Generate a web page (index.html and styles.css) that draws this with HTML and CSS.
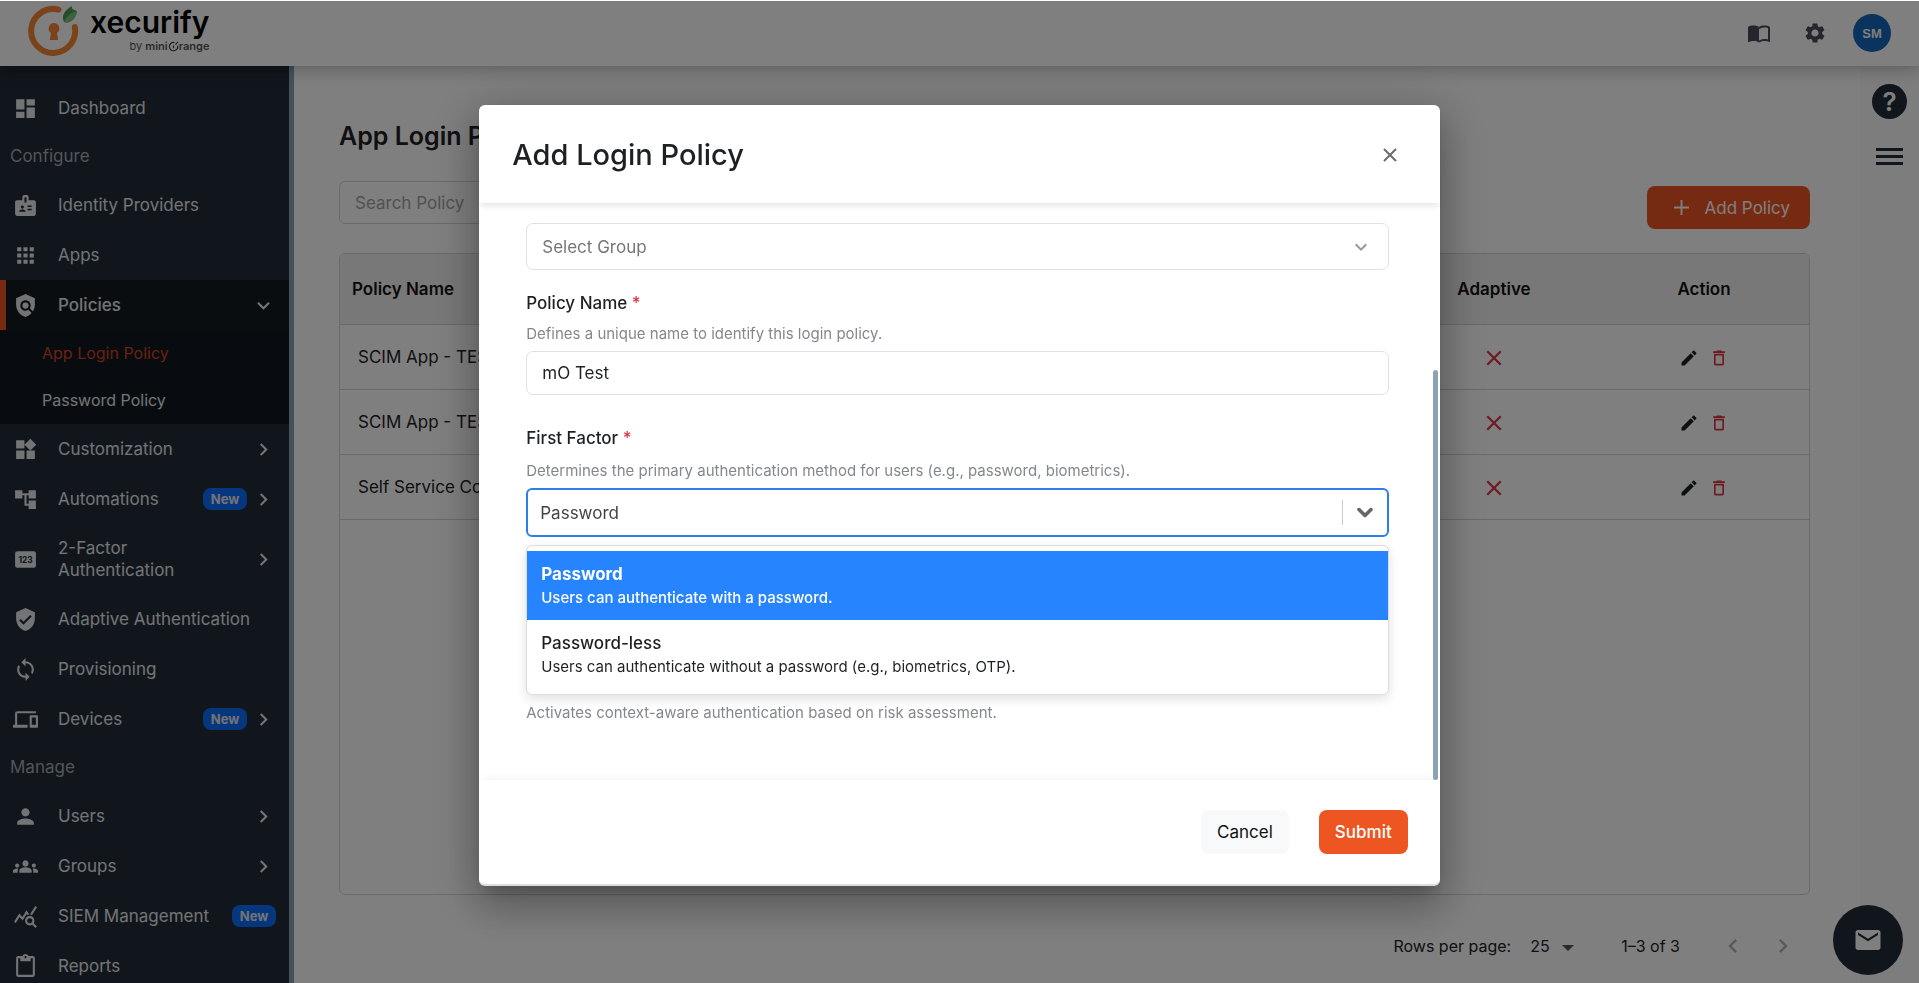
FILE: index.html
```html
<!DOCTYPE html>
<html lang="en">
    <head>
        <meta charset="UTF-8" />
        <meta name="viewport" content="width=device-width, initial-scale=1.0" />
        <title>App Login Policy</title>

        <link rel="stylesheet" href="styles.css">
    </head>
    <body>
        <!-- icon sprite -->
        <svg class="sprite" xmlns="http://www.w3.org/2000/svg">
            <symbol id="i-dashboard" viewBox="0 0 24 24"><path d="M3 13h8V3H3v10zm0 8h8v-6H3v6zm10 0h8V11h-8v10zm0-18v6h8V3h-8z" /></symbol>
            <symbol id="i-badge" viewBox="0 0 24 24"><path fill-rule="evenodd" d="M20 7h-5V4c0-1.1-.9-2-2-2h-2c-1.1 0-2 .9-2 2v3H4c-1.1 0-2 .9-2 2v11c0 1.1.9 2 2 2h16c1.1 0 2-.9 2-2V9c0-1.1-.9-2-2-2zM9 12c.83 0 1.5.67 1.5 1.5S9.83 15 9 15s-1.5-.67-1.5-1.5S8.17 12 9 12zm3 6H6v-.75c0-1 2-1.5 3-1.5s3 .5 3 1.5V18zm1-9h-2V4h2v5zm5 7.5h-4V15h4v1.5zm0-3h-4V12h4v1.5z" /></symbol>
            <symbol id="i-apps" viewBox="0 0 24 24"><path d="M4 8h4V4H4v4zm6 12h4v-4h-4v4zm-6 0h4v-4H4v4zm0-6h4v-4H4v4zm6 0h4v-4h-4v4zm6-10v4h4V4h-4zm-6 4h4V4h-4v4zm6 6h4v-4h-4v4zm0 6h4v-4h-4v4z" /></symbol>
            <symbol id="i-policy" viewBox="0 0 24 24"><path d="M21 5l-9-4-9 4v6c0 5.55 3.84 10.74 9 12 2.3-.56 4.33-1.9 5.88-3.71l-3.12-3.12c-1.94 1.29-4.58 1.07-6.29-.64-1.95-1.95-1.95-5.12 0-7.07 1.95-1.95 5.12-1.95 7.07 0 1.71 1.71 1.92 4.35.64 6.29l2.9 2.9C20.29 15.69 21 13.38 21 11V5z" /><circle cx="12" cy="12" r="3" /></symbol>
            <symbol id="i-widgets" viewBox="0 0 24 24"><path d="M13 13v8h8v-8h-8zM3 21h8v-8H3v8zM3 3v8h8V3H3zm13.66-1.31L11 7.34 16.66 13l5.66-5.66-5.66-5.65z" /></symbol>
            <symbol id="i-tree" viewBox="0 0 24 24"><path d="M22 11V3h-7v3H9V3H2v8h7V8h2v10h4v3h7v-8h-7v3h-2V8h2v3z" /></symbol>
            <symbol id="i-verified" viewBox="0 0 24 24"><path fill-rule="evenodd" d="M12 1L3 5v6c0 5.55 3.84 10.74 9 12 5.16-1.26 9-6.45 9-12V5l-9-4zm-2 16l-4-4 1.41-1.41L10 14.17l6.59-6.59L18 9l-8 8z" /></symbol>
            <symbol id="i-sync" viewBox="0 0 24 24"><path d="M12 4V1L8 5l4 4V6c3.31 0 6 2.69 6 6 0 1.01-.25 1.97-.7 2.8l1.46 1.46C19.54 15.03 20 13.57 20 12c0-4.42-3.58-8-8-8zm0 14c-3.31 0-6-2.69-6-6 0-1.01.25-1.97.7-2.8L5.24 7.74C4.46 8.97 4 10.43 4 12c0 4.42 3.58 8 8 8v3l4-4-4-4v3z" /></symbol>
            <symbol id="i-devices" viewBox="0 0 24 24"><path d="M4 6h18V4H4c-1.1 0-2 .9-2 2v11H0v3h14v-3H4V6zm19 2h-6c-.55 0-1 .45-1 1v10c0 .55.45 1 1 1h6c.55 0 1-.45 1-1V9c0-.55-.45-1-1-1zm-1 9h-4v-7h4v7z" /></symbol>
            <symbol id="i-person" viewBox="0 0 24 24"><path d="M12 12c2.21 0 4-1.79 4-4s-1.79-4-4-4-4 1.79-4 4 1.79 4 4 4zm0 2c-2.67 0-8 1.34-8 4v2h16v-2c0-2.66-5.33-4-8-4z" /></symbol>
            <symbol id="i-groups" viewBox="0 0 24 24"><path d="M12 12.75c1.63 0 3.07.39 4.24.9 1.08.48 1.76 1.56 1.76 2.73V18H6v-1.61c0-1.18.68-2.26 1.76-2.73 1.17-.52 2.61-.91 4.24-.91zM4 13c1.1 0 2-.9 2-2s-.9-2-2-2-2 .9-2 2 .9 2 2 2zm1.13 1.1c-.37-.06-.74-.1-1.13-.1-.99 0-1.93.21-2.78.58C.48 14.9 0 15.62 0 16.43V18h4.5v-1.61c0-.83.23-1.61.63-2.29zM20 13c1.1 0 2-.9 2-2s-.9-2-2-2-2 .9-2 2 .9 2 2 2zm4 3.43c0-.81-.48-1.53-1.22-1.85-.85-.37-1.79-.58-2.78-.58-.39 0-.76.04-1.13.1.4.68.63 1.46.63 2.29V18H24v-1.57zM12 6c1.66 0 3 1.34 3 3s-1.34 3-3 3-3-1.34-3-3 1.34-3 3-3z" /></symbol>
            <symbol id="i-stats" viewBox="0 0 24 24"><path d="M19.88 18.47c.44-.7.7-1.51.7-2.39 0-2.49-2.01-4.5-4.5-4.5s-4.5 2.01-4.5 4.5 2.01 4.5 4.49 4.5c.88 0 1.7-.26 2.39-.7L21.58 23 23 21.58l-3.12-3.11zm-3.8.11c-1.38 0-2.5-1.12-2.5-2.5s1.12-2.5 2.5-2.5 2.5 1.12 2.5 2.5-1.12 2.5-2.5 2.5zm-.36-8.5c-.74.02-1.45.18-2.1.45l-.55-.83-3.8 6.18-3.01-3.52-3.63 5.81L1 17l5-8 3 3.5L13 6l2.72 4.08zm2.59.5c-.64-.28-1.33-.45-2.05-.49L21.38 2 23 3.18l-4.69 7.4z" /></symbol>
            <symbol id="i-clipboard" viewBox="0 0 24 24"><path d="M19 2h-4.18C14.4.84 13.3 0 12 0c-1.3 0-2.4.84-2.82 2H5c-1.1 0-2 .9-2 2v16c0 1.1.9 2 2 2h14c1.1 0 2-.9 2-2V4c0-1.1-.9-2-2-2zm-7 0c.55 0 1 .45 1 1s-.45 1-1 1-1-.45-1-1 .45-1 1-1zm7 18H5V4h2v3h10V4h2v16z" /></symbol>
            <symbol id="i-book" viewBox="0 0 24 24"><path d="M21 5c-1.11-.35-2.33-.5-3.5-.5-1.95 0-4.05.4-5.5 1.5-1.45-1.1-3.55-1.5-5.5-1.5S2.45 4.9 1 6v14.65c0 .25.25.5.5.5.1 0 .15-.05.25-.05C3.1 20.45 5.05 20 6.5 20c1.95 0 4.05.4 5.5 1.5 1.35-.85 3.8-1.5 5.5-1.5 1.65 0 3.35.3 4.75 1.05.1.05.15.05.25.05.25 0 .5-.25.5-.5V6c-.6-.45-1.25-.75-2-1zm0 13.5c-1.1-.35-2.3-.5-3.5-.5-1.7 0-4.15.65-5.5 1.5V8c1.35-.85 3.8-1.5 5.5-1.5 1.2 0 2.4.15 3.5.5v11.5z" /></symbol>
            <symbol id="i-settings" viewBox="0 0 24 24"><path d="M19.14 12.94c.04-.3.06-.61.06-.94 0-.32-.02-.64-.07-.94l2.03-1.58c.18-.14.23-.41.12-.61l-1.92-3.32c-.12-.22-.37-.29-.59-.22l-2.39.96c-.5-.38-1.03-.7-1.62-.94l-.36-2.54c-.04-.24-.24-.41-.48-.41h-3.84c-.24 0-.43.17-.47.41l-.36 2.54c-.59.24-1.13.57-1.62.94l-2.39-.96c-.22-.08-.47 0-.59.22L2.74 8.87c-.12.21-.08.47.12.61l2.03 1.58c-.05.3-.09.63-.09.94s.02.64.07.94l-2.03 1.58c-.18.14-.23.41-.12.61l1.92 3.32c.12.22.37.29.59.22l2.39-.96c.5.38 1.03.7 1.62.94l.36 2.54c.05.24.24.41.48.41h3.84c.24 0 .44-.17.47-.41l.36-2.54c.59-.24 1.13-.56 1.62-.94l2.39.96c.22.08.47 0 .59-.22l1.92-3.32c.12-.22.07-.47-.12-.61l-2.01-1.58zM12 15.6c-1.98 0-3.6-1.62-3.6-3.6s1.62-3.6 3.6-3.6 3.6 1.62 3.6 3.6-1.62 3.6-3.6 3.6z" /></symbol>
            <symbol id="i-mail" viewBox="0 0 24 24"><path d="M20 4H4c-1.1 0-1.99.9-1.99 2L2 18c0 1.1.9 2 2 2h16c1.1 0 2-.9 2-2V6c0-1.1-.9-2-2-2zm0 4l-8 5-8-5V6l8 5 8-5v2z" /></symbol>
            <symbol id="i-edit" viewBox="0 0 24 24"><path d="M3 17.25V21h3.75L17.81 9.94l-3.75-3.75L3 17.25zM20.71 7.04c.39-.39.39-1.02 0-1.41l-2.34-2.34c-.39-.39-1.02-.39-1.41 0l-1.83 1.83 3.75 3.75 1.83-1.83z" /></symbol>
            <symbol id="i-delete" viewBox="0 0 24 24"><path d="M6 19c0 1.1.9 2 2 2h8c1.1 0 2-.9 2-2V7H6v12zM8 9h8v10H8V9zm7.5-5l-1-1h-5l-1 1H5v2h14V4h-3.5z" /></symbol>
            <symbol id="i-right" viewBox="0 0 24 24"><path d="M10 6L8.59 7.41 13.17 12l-4.58 4.59L10 18l6-6z" /></symbol>
            <symbol id="i-left" viewBox="0 0 24 24"><path d="M15.41 7.41L14 6l-6 6 6 6 1.41-1.41L10.83 12z" /></symbol>
            <symbol id="i-down" viewBox="0 0 24 24"><path d="M7.41 8.59L12 13.17l4.59-4.58L18 10l-6 6-6-6 1.41-1.41z" /></symbol>
            <symbol id="i-cross" viewBox="0 0 16 16"><path d="M2 2l12 12M14 2L2 14" fill="none" stroke="currentColor" stroke-width="2" /></symbol>
        </svg>

        <header class="topbar">
            <a class="logo" href="#" aria-label="xecurify by miniOrange">
                <svg class="logo-mark" viewBox="0 0 52 52" aria-hidden="true">
                    <path d="M30.500 4.600A22 22 0 1 0 46.800 22" fill="none" stroke="#f58634" stroke-width="6" stroke-linecap="round" />
                    <path d="M26 18a5.500 5.500 0 0 1 3 10l1.200 7h-8.400l1.200-7a5.500 5.500 0 0 1 3-10z" fill="#f58634" />
                    <path d="M36 17c-3-7 1-12 8-16-1 2 1 4 5 5-1 8-7 13-13 11z" fill="#4b9b54" />
                    <path d="M36 17c3-6 7-10 13-11-1 8-7 13-13 11z" fill="#7fc47a" />
                </svg>
                <span class="logo-text">
                    <span class="logo-name">xecurify</span>
                    <span class="logo-by">by <b>mini<svg viewBox="0 0 12 12" aria-hidden="true"><path d="M7 1.600A4.600 4.600 0 1 0 10.500 5M8 4l3-3M6 5v3" fill="none" stroke="#333" stroke-width="1.200" /></svg>range</b></span>
                </span>
            </a>
            <div class="topbar-actions">
                <button class="icon-button" aria-label="Documentation"><svg><use href="#i-book" /></svg></button>
                <button class="icon-button" aria-label="Settings"><svg><use href="#i-settings" /></svg></button>
                <button class="avatar">SM</button>
            </div>
        </header>

        <div class="layout">
            <nav class="sidebar">
                <a href="#" class="nav-item"><svg><use href="#i-dashboard" /></svg><span>Dashboard</span></a>
                <p class="nav-heading">Configure</p>
                <a href="#" class="nav-item"><svg><use href="#i-badge" /></svg><span>Identity Providers</span></a>
                <a href="#" class="nav-item"><svg><use href="#i-apps" /></svg><span>Apps</span></a>
                <a href="#" class="nav-item active"><svg><use href="#i-policy" /></svg><span>Policies</span><svg class="chevron"><use href="#i-down" /></svg></a>
                <div class="submenu">
                    <a href="#" class="current">App Login Policy</a>
                    <a href="#">Password Policy</a>
                </div>
                <a href="#" class="nav-item"><svg><use href="#i-widgets" /></svg><span>Customization</span><svg class="chevron"><use href="#i-right" /></svg></a>
                <a href="#" class="nav-item"><svg><use href="#i-tree" /></svg><span>Automations</span><em class="new">New</em><svg class="chevron"><use href="#i-right" /></svg></a>
                <a href="#" class="nav-item two-line">
                    <svg viewBox="0 0 24 24"><rect x="2" y="4" width="20" height="16" rx="2" /><text x="12" y="15" class="pin-digits">123</text></svg>
                    <span>2-Factor Authentication</span>
                    <svg class="chevron"><use href="#i-right" /></svg>
                </a>
                <a href="#" class="nav-item"><svg><use href="#i-verified" /></svg><span>Adaptive Authentication</span></a>
                <a href="#" class="nav-item"><svg><use href="#i-sync" /></svg><span>Provisioning</span></a>
                <a href="#" class="nav-item"><svg><use href="#i-devices" /></svg><span>Devices</span><em class="new">New</em><svg class="chevron"><use href="#i-right" /></svg></a>
                <p class="nav-heading">Manage</p>
                <a href="#" class="nav-item"><svg><use href="#i-person" /></svg><span>Users</span><svg class="chevron"><use href="#i-right" /></svg></a>
                <a href="#" class="nav-item"><svg><use href="#i-groups" /></svg><span>Groups</span><svg class="chevron"><use href="#i-right" /></svg></a>
                <a href="#" class="nav-item"><svg><use href="#i-stats" /></svg><span>SIEM Management</span><em class="new">New</em></a>
                <a href="#" class="nav-item"><svg><use href="#i-clipboard" /></svg><span>Reports</span></a>
            </nav>

            <main class="content">
                <h1>App Login Policy</h1>
                <div class="toolbar">
                    <input type="search" class="search" placeholder="Search Policy" aria-label="Search Policy" />
                    <button class="button primary add"><svg viewBox="0 0 16 16" aria-hidden="true"><path d="M8 0v16M0 8h16" stroke="currentColor" stroke-width="2" /></svg>Add Policy</button>
                </div>
                <div class="table-wrap">
                    <table>
                        <thead>
                            <tr><th>Policy Name</th><th>Adaptive</th><th>Action</th></tr>
                        </thead>
                        <tbody>
                            <tr>
                                <td>SCIM App - TEST</td>
                                <td><svg class="no"><use href="#i-cross" /></svg></td>
                                <td>
                                    <button class="row-button" aria-label="Edit"><svg><use href="#i-edit" /></svg></button>
                                    <button class="row-button delete" aria-label="Delete"><svg><use href="#i-delete" /></svg></button>
                                </td>
                            </tr>
                            <tr>
                                <td>SCIM App - TEST</td>
                                <td><svg class="no"><use href="#i-cross" /></svg></td>
                                <td>
                                    <button class="row-button" aria-label="Edit"><svg><use href="#i-edit" /></svg></button>
                                    <button class="row-button delete" aria-label="Delete"><svg><use href="#i-delete" /></svg></button>
                                </td>
                            </tr>
                            <tr>
                                <td>Self Service Console</td>
                                <td><svg class="no"><use href="#i-cross" /></svg></td>
                                <td>
                                    <button class="row-button" aria-label="Edit"><svg><use href="#i-edit" /></svg></button>
                                    <button class="row-button delete" aria-label="Delete"><svg><use href="#i-delete" /></svg></button>
                                </td>
                            </tr>
                        </tbody>
                    </table>
                </div>
                <div class="pagination">
                    <label for="rows">Rows per page:</label>
                    <div class="rows-select">
                        <select id="rows"><option>25</option><option>50</option></select>
                    </div>
                    <span class="range">1–3 of 3</span>
                    <button aria-label="Previous page"><svg><use href="#i-left" /></svg></button>
                    <button aria-label="Next page"><svg><use href="#i-right" /></svg></button>
                </div>
            </main>

            <aside class="rail">
                <button class="help" aria-label="Help">?</button>
                <button class="menu-toggle" aria-label="Menu"><i></i><i></i><i></i></button>
            </aside>
        </div>

        <button class="mail" aria-label="Contact us"><svg><use href="#i-mail" /></svg></button>

        <div class="backdrop">
            <form class="modal" role="dialog" aria-labelledby="modal-title">
                <div class="modal-header">
                    <h2 id="modal-title">Add Login Policy</h2>
                    <button type="button" class="close" aria-label="Close"><svg><use href="#i-cross" /></svg></button>
                </div>

                <div class="modal-body">
                    <div class="select-wrap group">
                        <select class="control" aria-label="Select Group">
                            <option>Select Group</option>
                        </select>
                        <svg><use href="#i-down" /></svg>
                    </div>

                    <div class="field">
                        <label for="policy-name">Policy Name <span class="required">*</span></label>
                        <p class="hint">Defines a unique name to identify this login policy.</p>
                        <input class="control" id="policy-name" type="text" value="mO Test" />
                    </div>

                    <div class="field factor">
                        <label for="first-factor">First Factor <span class="required">*</span></label>
                        <p class="hint">Determines the primary authentication method for users (e.g., password, biometrics).</p>
                        <div class="select-wrap focused">
                            <select class="control" id="first-factor">
                                <option>Password</option>
                                <option>Password-less</option>
                            </select>
                            <svg viewBox="0 0 20 20"><path d="M5 8l5 5 5-5" fill="none" stroke="currentColor" stroke-width="3" stroke-linecap="round" stroke-linejoin="round" /></svg>
                            <ul class="options" role="listbox" aria-label="First Factor">
                                <li class="selected" role="option" aria-selected="true">
                                    <strong>Password</strong>
                                    <span>Users can authenticate with a password.</span>
                                </li>
                                <li role="option" aria-selected="false">
                                    <strong>Password-less</strong>
                                    <span>Users can authenticate without a password (e.g., biometrics, OTP).</span>
                                </li>
                            </ul>
                        </div>
                    </div>

                    <p class="hint risk">Activates context-aware authentication based on risk assessment.</p>
                    <div class="scroll-thumb"></div>
                </div>

                <div class="modal-footer">
                    <button type="button" class="button light">Cancel</button>
                    <button type="submit" class="button primary">Submit</button>
                </div>
            </form>
        </div>
    </body>
</html>
```
FILE: styles.css
```css
* {
    box-sizing: border-box;
}

body {
    margin: 0;
    height: 100vh;
    overflow: hidden;
    display: flex;
    flex-direction: column;
    font-family: "Inter", "Liberation Sans", sans-serif;
    font-size: 17px;
    line-height: 22px;
    color: #1e2124;
    background-color: #fff;
}

h1, h2, p, ul {
    margin: 0;
    padding: 0;
}

a {
    color: inherit;
    text-decoration: none;
}

button, input, select {
    font: inherit;
    color: inherit;
}

button {
    border: 0;
    padding: 0;
    background: none;
    cursor: pointer;
}

svg {
    fill: currentColor;
    flex: none;
}

.sprite {
    display: none;
}

/* top bar */

.topbar {
    flex: none;
    height: 66px;
    padding: 0 28px;
    display: flex;
    align-items: center;
    justify-content: space-between;
    background-color: #fff;
    box-shadow: 0 2px 18px rgba(0, 0, 0, 0.3);
    position: relative;
    z-index: 1;
}

.logo {
    display: flex;
    align-items: center;
    gap: 10px;
    color: #000;
}

.logo-mark {
    width: 52px;
    height: 52px;
    margin-bottom: 4px;
}

.logo-text {
    display: flex;
    flex-direction: column;
    align-items: flex-end;
    padding-bottom: 4px;
}

.logo-name {
    font-size: 30px;
    font-weight: 600;
    line-height: 30px;
}

.logo-by {
    font-size: 11px;
    line-height: 18px;
    color: #555;
}

.logo-by b {
    font-weight: 600;
}

.logo-by svg {
    width: 11px;
    height: 11px;
    vertical-align: -2px;
}

.topbar-actions {
    display: flex;
    align-items: center;
    gap: 32px;
}

.icon-button {
    width: 24px;
    height: 24px;
    color: #4d4a5c;
}

.icon-button svg {
    width: 24px;
    height: 24px;
    display: block;
}

.avatar {
    width: 38px;
    height: 38px;
    margin-left: -6px;
    border-radius: 50%;
    background-color: #1467bb;
    color: #fff;
    font: bold 13px "Liberation Sans", sans-serif;
}

.layout {
    flex: 1;
    min-height: 0;
    display: flex;
}

/* sidebar */

.sidebar {
    flex: none;
    width: 294px;
    padding-top: 17px;
    overflow: hidden;
    color: #e6e8ea;
    background-color: #202c39;
    border-right: 5px solid #8ba3b5;
}

.nav-item {
    display: flex;
    align-items: center;
    min-height: 50px;
    padding: 0 13px;
}

.nav-item svg {
    width: 25px;
    height: 25px;
}

.nav-item span {
    flex: 1;
    margin-left: 20px;
}

.two-line {
    padding-top: 13px;
    padding-bottom: 13px;
}

.nav-item .chevron {
    margin-left: 4px;
}

.pin-digits {
    fill: #202c39;
    font: bold 8px "Inter", sans-serif;
    text-anchor: middle;
}

.nav-heading {
    padding: 0 10px;
    line-height: 47px;
    color: #a6abb0;
}

.active {
    padding-left: 7px;
    font-weight: 500;
    background-color: #141a20;
    border-left: 6px solid #ed5522;
}

.submenu {
    background-color: #111820;
    font-size: 16px;
}

.submenu a {
    display: block;
    padding-left: 42px;
    line-height: 47px;
}

.submenu .current {
    color: #d8401f;
}

.new {
    width: 44px;
    border-radius: 8px;
    background-color: #0d6efd;
    font-size: 13px;
    font-style: normal;
    font-weight: 700;
    text-align: center;
}

/* page */

.content {
    flex: 1;
    min-width: 0;
    padding: 56px 50px 16px 45px;
    display: flex;
    flex-direction: column;
}

h1 {
    font-size: 25px;
    font-weight: 600;
    line-height: 28px;
}

.toolbar {
    display: flex;
    justify-content: space-between;
    margin: 31px 0 24px;
}

.search {
    width: 300px;
    height: 43px;
    padding: 0 15px;
    border: 1px solid #d4d7da;
    border-radius: 6px;
    background: none;
}

.search::placeholder {
    color: #a3a3a3;
}

.button {
    height: 44px;
    padding: 0 16px;
    border-radius: 8px;
    font-weight: 500;
}

.primary {
    color: #fff;
    background-color: #ed5522;
}

.light {
    color: #111;
    font-weight: 400;
    background-color: #f8f9fb;
}

.add {
    display: flex;
    align-items: center;
    gap: 16px;
    height: 43px;
    margin-top: 5px;
    padding: 0 20px 0 27px;
    font-weight: 400;
}

.add svg {
    width: 15px;
    height: 15px;
}

.table-wrap {
    flex: 1;
    border: 1px solid #d5d5d5;
    border-radius: 6px;
    overflow: hidden;
}

table {
    width: 100%;
    border-collapse: collapse;
    table-layout: fixed;
}

th {
    height: 70px;
    padding: 0 12px;
    font-weight: 600;
    color: #111;
    background-color: #f1f1f1;
    border-bottom: 1px solid #d5d5d5;
}

td {
    height: 65px;
    padding: 0 18px;
    text-align: center;
    border-bottom: 1px solid #d5d5d5;
}

th:first-child,
td:first-child {
    text-align: left;
}

th:nth-child(n + 2) {
    width: 210px;
}

.no {
    width: 18px;
    height: 18px;
    color: #dc3545;
    vertical-align: middle;
}

.row-button {
    width: 20px;
    height: 20px;
    margin: 0 3px;
    vertical-align: middle;
}

.row-button svg {
    display: block;
    width: 20px;
    height: 20px;
}

.delete {
    color: #dc3545;
}

.pagination {
    display: flex;
    align-items: center;
    justify-content: flex-end;
    height: 72px;
    padding-top: 30px;
    padding-right: 7px;
    font-size: 16px;
}

.rows-select {
    position: relative;
    margin-left: 19px;
}

.rows-select::after {
    content: "";
    position: absolute;
    right: 0;
    top: 10px;
    border: 6px solid transparent;
    border-top-color: #555;
    pointer-events: none;
}

.rows-select select {
    appearance: none;
    width: 44px;
    padding: 0;
    border: 0;
    background: none;
}

.range {
    margin: 0 23px 0 47px;
}

.pagination button {
    width: 40px;
    height: 40px;
    margin-left: 10px;
    color: #b3b3b3;
}

.pagination svg {
    display: block;
    width: 28px;
    height: 28px;
    margin: auto;
}

.rail {
    flex: none;
    width: 59px;
    padding-top: 18px;
    display: flex;
    flex-direction: column;
    align-items: center;
    background-color: #fbfbfb;
}

.help {
    width: 35px;
    height: 35px;
    border-radius: 50%;
    color: #fff;
    font-size: 26px;
    font-weight: 600;
    background-color: #202c39;
}

.menu-toggle {
    display: grid;
    gap: 4px;
    width: 27px;
    margin-top: 29px;
}

.menu-toggle i {
    height: 3px;
    background-color: #202c39;
}

.mail {
    position: fixed;
    right: 16px;
    bottom: 8px;
    width: 70px;
    height: 70px;
    border-radius: 50%;
    color: #fff;
    background-color: #202c39;
}

.mail svg {
    display: block;
    width: 30px;
    height: 30px;
    margin: auto;
}

/* modal */

.backdrop {
    position: fixed;
    inset: 1px 0 0;
    z-index: 10;
    padding-top: 104px;
    background-color: rgba(0, 0, 0, 0.5);
}

.modal {
    width: calc(50% + 1px);
    margin: 0 auto;
    border-radius: 6px;
    border-bottom: 2px solid #ddd;
    background-color: #fff;
    box-shadow: 0 11px 15px -7px rgba(0, 0, 0, 0.2), 0 24px 38px 3px rgba(0, 0, 0, 0.14), 0 9px 46px 8px rgba(0, 0, 0, 0.2);
}

.modal-header {
    display: flex;
    align-items: center;
    justify-content: space-between;
    height: 98px;
    padding: 2px 42px 0 33px;
    box-shadow: 0 5px 6px -2px rgba(0, 0, 0, 0.1);
}

.modal-header h2 {
    font-size: 29px;
    font-weight: 500;
    line-height: 36px;
}

.close {
    width: 16px;
    height: 16px;
    color: #6c6c6c;
}

.close svg {
    display: block;
    width: 16px;
    height: 16px;
}

.modal-body {
    position: relative;
    padding: 20px 51px 57px 47px;
}

.field {
    display: flex;
    flex-direction: column;
    margin-top: 22px;
}

.field label {
    font-weight: 500;
}

.required {
    color: #dc3545;
}

.hint {
    font-size: 15px;
    line-height: 20px;
    color: #85888b;
    margin: 10px 0 7px;
}

.factor {
    margin-top: 32px;
}

.factor .hint {
    margin-top: 12px;
}

.control {
    width: 100%;
    height: 44px;
    padding: 0 15px;
    border: 1px solid #dee2e6;
    border-radius: 7px;
    background-color: #fff;
    outline: 0;
}

.select-wrap {
    position: relative;
}

.select-wrap .control {
    display: block;
    appearance: none;
    height: 47px;
    color: #777;
}

.select-wrap svg {
    position: absolute;
    right: 16px;
    top: 12px;
    width: 24px;
    height: 24px;
    color: #999;
    pointer-events: none;
}

.focused .control {
    height: 49px;
    padding: 0 12px;
    border: 2px solid #2f7de6;
    border-radius: 6px;
    color: #444;
}

.focused svg {
    right: 12px;
    color: #666;
}

.focused::after {
    content: "";
    position: absolute;
    right: 46px;
    top: 12px;
    height: 25px;
    border-left: 1px solid #ccc;
}

.options {
    position: absolute;
    top: 57px;
    left: 0;
    right: 0;
    z-index: 1;
    padding: 5px 0;
    list-style: none;
    background-color: #fff;
    border: 1px solid #ddd;
    border-radius: 6px;
    box-shadow: 0 4px 11px rgba(0, 0, 0, 0.12);
}

.options li {
    display: flex;
    flex-direction: column;
    gap: 3px;
    height: 69px;
    padding: 12px 14px;
}

.options strong {
    font-weight: 500;
}

.options span {
    font-size: 15px;
    line-height: 20px;
}

.options .selected {
    color: #fff;
    background-color: #2684ff;
}

.selected strong {
    font-weight: 700;
}

.selected span {
    font-weight: 500;
}

.risk {
    margin: 166px 0 0;
}

.scroll-thumb {
    position: absolute;
    top: 167px;
    right: 2px;
    bottom: 0;
    width: 5px;
    border-radius: 3px;
    background-color: #8ba3b5;
}

.modal-footer {
    display: flex;
    justify-content: flex-end;
    gap: 30px;
    padding: 30px 32px;
    box-shadow: 0 -5px 8px -4px rgba(0, 0, 0, 0.06);
}
```
